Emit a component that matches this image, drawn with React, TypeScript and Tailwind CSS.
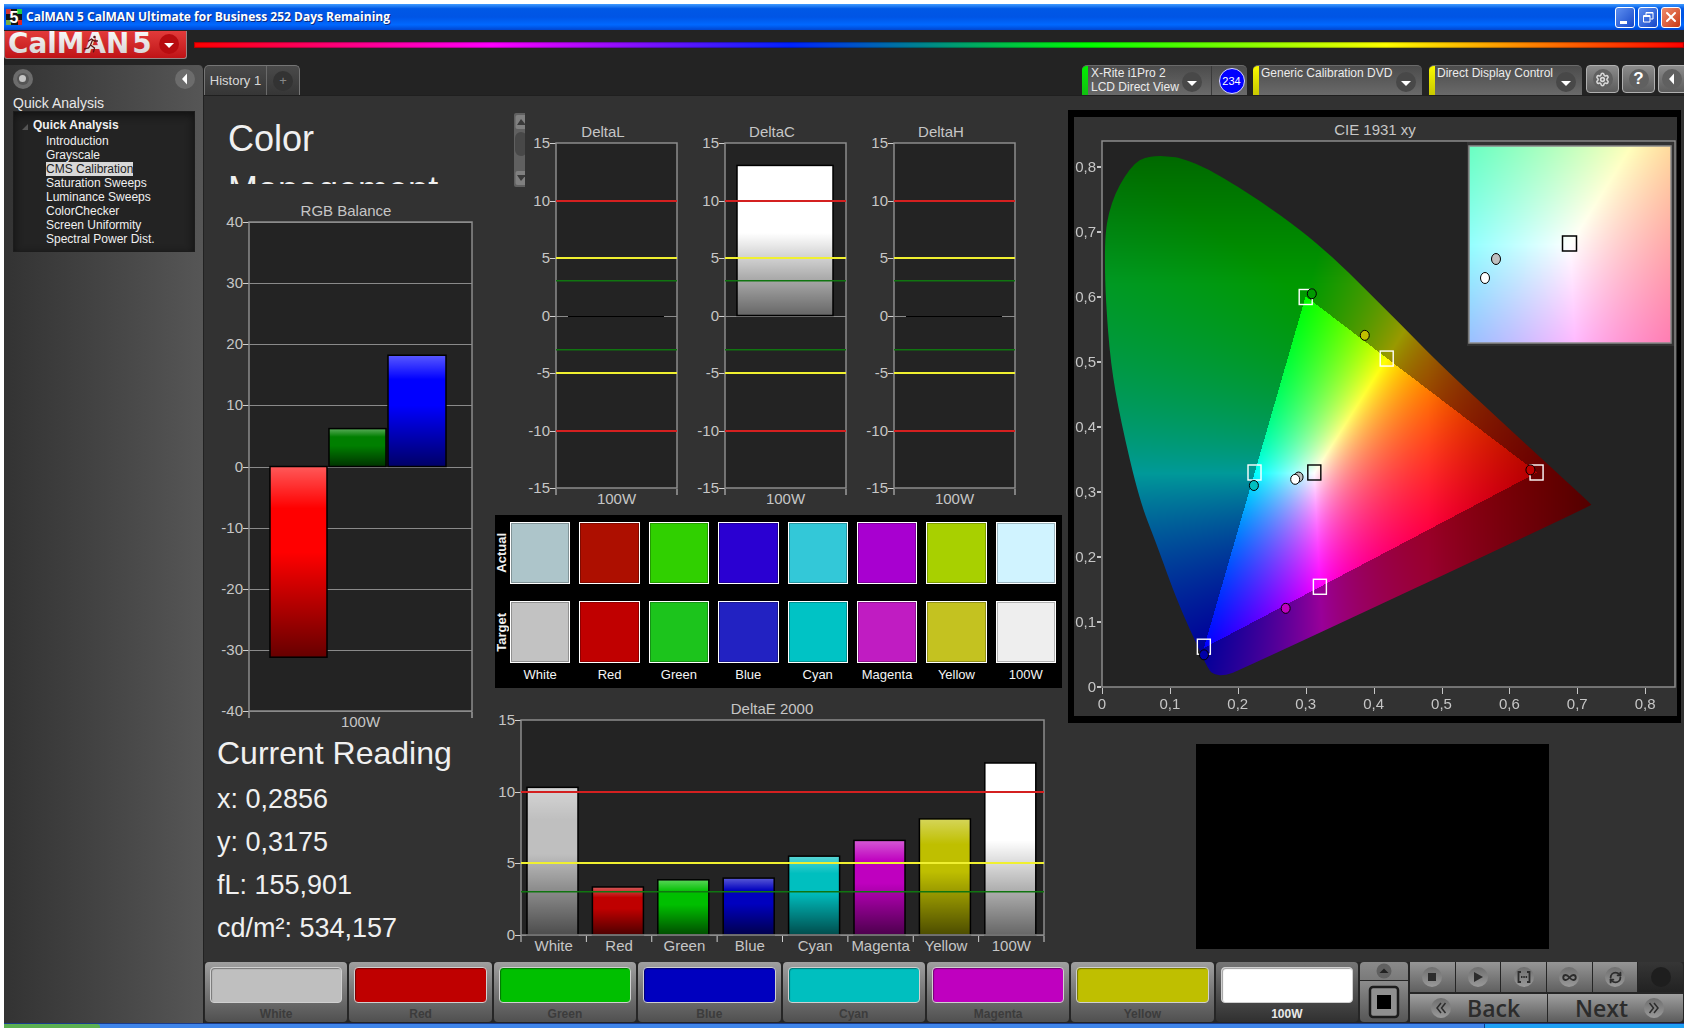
import React, { useEffect, useRef } from 'react';
import { Infinity as InfinityIcon, RefreshCw, Settings, X } from 'lucide-react';

type Point = [number, number];

interface Bar {
  value: number;
  color: string;
  x: number;
  width: number;
}

interface Threshold {
  value: number;
  color: string;
}

interface BarChartProps {
  id: string;
  title: string;
  titleX: number;
  width: number;
  height: number;
  plot: { x: number; y: number; w: number; h: number };
  min: number;
  max: number;
  step: number;
  grid?: boolean;
  thresholds?: Threshold[];
  bars: Bar[];
  categories: string[];
}

const PATTERNS = [
  { name: 'White', actual: '#adc5ca', target: '#c2c2c2', button: '#bfbfbf', deltaE: 10.3 },
  { name: 'Red', actual: '#ad0f00', target: '#c00000', button: '#bf0000', deltaE: 3.35 },
  { name: 'Green', actual: '#30d000', target: '#1cc41c', button: '#00bf00', deltaE: 3.85 },
  { name: 'Blue', actual: '#2a00d2', target: '#2222c2', button: '#0000bf', deltaE: 3.97 },
  { name: 'Cyan', actual: '#33c8d8', target: '#00c3c5', button: '#00bfbf', deltaE: 5.5 },
  { name: 'Magenta', actual: '#a800d0', target: '#c01cc2', button: '#bf00bf', deltaE: 6.6 },
  { name: 'Yellow', actual: '#a8d000', target: '#c4c220', button: '#bfbf00', deltaE: 8.1 },
  { name: '100W', actual: '#d0f3ff', target: '#eeeeee', button: '#ffffff', deltaE: 12 },
];

const DELTA_THRESHOLDS: Threshold[] = [
  { value: 10, color: '#d42020' },
  { value: 5, color: '#f0f030' },
  { value: 3, color: '#107510' },
  { value: -3, color: '#107510' },
  { value: -5, color: '#f0f030' },
  { value: -10, color: '#d42020' },
];

const WORKFLOW = [
  'Introduction',
  'Grayscale',
  'CMS Calibration',
  'Saturation Sweeps',
  'Luminance Sweeps',
  'ColorChecker',
  'Screen Uniformity',
  'Spectral Power Dist.',
];

const BarChart: React.FC<BarChartProps> = ({
  id, title, titleX, width, height, plot, min, max, step, grid, thresholds = [], bars, categories,
}) => {
  const toY = (v: number) => plot.y + ((max - v) / (max - min)) * plot.h;
  const ticks: number[] = [];
  for (let v = min; v <= max; v += step) ticks.push(v);
  const slot = plot.w / categories.length;

  return (
    <svg viewBox={`0 0 ${width} ${height}`} className="block min-w-0 flex-1 text-[15px]" role="img" aria-label={title}>
      <text x={titleX} y={plot.y - 6} textAnchor="middle" fill="#c6c6c6">{title}</text>
      <rect x={plot.x} y={plot.y} width={plot.w} height={plot.h} fill="#232323" />
      {ticks.map((v) => (
        <g key={v}>
          {(grid || v === 0) && (
            <rect x={plot.x} y={Math.round(toY(v))} width={plot.w} height="1" fill="#8a8a8a" />
          )}
          <rect x={plot.x - 6} y={Math.round(toY(v))} width="6" height="1" fill="#d0d0d0" />
          <text x={plot.x - 6} y={Math.round(toY(v)) + 5} textAnchor="end" fill="#c6c6c6">{v}</text>
        </g>
      ))}
      {bars.map((bar, i) => {
        if (bar.value === 0) {
          return <rect key={i} x={bar.x} y={Math.round(toY(0))} width={bar.width} height="1" fill="#000" />;
        }
        const top = toY(Math.max(bar.value, 0));
        const h = Math.abs(toY(bar.value) - toY(0));
        return (
          <g key={i}>
            <defs>
              <linearGradient id={`${id}-${i}`} x1="0" y1="0" x2="0" y2="1">
                <stop offset="0" stopColor="#fff" stopOpacity="0.35" />
                <stop offset="0.22" stopColor="#fff" stopOpacity="0" />
                <stop offset="0.45" stopColor="#000" stopOpacity="0" />
                <stop offset="1" stopColor="#000" stopOpacity="0.6" />
              </linearGradient>
            </defs>
            <rect x={bar.x} y={top} width={bar.width} height={h} fill={bar.color} />
            <rect x={bar.x} y={top} width={bar.width} height={h} fill={`url(#${id}-${i})`} stroke="#000" strokeWidth="1.5" />
          </g>
        );
      })}
      <rect x={plot.x} y={plot.y} width={plot.w} height={plot.h} fill="none" stroke="#8c8c8c" strokeWidth="1.5" />
      {thresholds.map((t) => (
        <rect key={t.value} x={plot.x} y={Math.round(toY(t.value)) - 1} width={plot.w} height={Math.abs(t.value) === 3 ? 1.5 : 2} fill={t.color} />
      ))}
      {Array.from({ length: categories.length + 1 }, (_, i) => (
        <rect key={i} x={plot.x + i * slot - 0.5} y={plot.y + plot.h + 1} width="1" height="6" fill="#d0d0d0" />
      ))}
      {categories.map((c, i) => (
        <text key={c} x={plot.x + (i + 0.5) * slot} y={plot.y + plot.h + 16} textAnchor="middle" fill="#c6c6c6">{c}</text>
      ))}
    </svg>
  );
};

/* ---------- CIE 1931 chromaticity ---------- */

const LOCUS: Point[] = [
  [0.004, 0.657], [0.005, 0.698], [0.0097, 0.729], [0.0197, 0.7595], [0.033, 0.785], [0.048, 0.8056],
  [0.063, 0.8149], [0.08, 0.817], [0.101, 0.8164], [0.1157, 0.8133], [0.139, 0.805], [0.1687, 0.79],
  [0.2335, 0.7477], [0.2924, 0.703], [0.3395, 0.662], [0.3866, 0.6133], [0.4396, 0.5585], [0.4985, 0.4954],
  [0.628, 0.3697], [0.72, 0.282], [0.721, 0.279], [0.204, 0.0262], [0.1816, 0.018], [0.1657, 0.0185],
  [0.157, 0.026], [0.139, 0.067], [0.1186, 0.1133], [0.101, 0.1595], [0.08, 0.221], [0.055, 0.2877],
  [0.0273, 0.4108], [0.0126, 0.498], [0.0055, 0.5954],
];

// xy -> RGB, scaled so that the strongest channel is 1
const chromaToRgb = (x: number, y: number) => {
  const X = x / y;
  const Z = (1 - x - y) / y;
  const rgb = [
    3.2406 * X - 1.5372 - 0.4986 * Z,
    -0.9689 * X + 1.8758 + 0.0415 * Z,
    0.0557 * X - 0.204 + 1.057 * Z,
  ];
  const inside = rgb.every((c) => c >= -0.002);
  const peak = Math.max(...rgb);
  return { rgb: rgb.map((c) => Math.max(c, 0) / peak), inside };
};

interface ChromaCanvasProps {
  width: number;
  height: number;
  x0: number;
  x1: number;
  y0: number;
  y1: number;
  locus?: boolean;
}

const ChromaCanvas: React.FC<ChromaCanvasProps> = ({ width, height, x0, x1, y0, y1, locus }) => {
  const ref = useRef<HTMLCanvasElement>(null);

  useEffect(() => {
    const ctx = ref.current?.getContext('2d');
    if (!ctx) return;
    const image = ctx.createImageData(width, height);
    for (let j = 0; j < height; j++) {
      for (let i = 0; i < width; i++) {
        const x = x0 + ((i + 0.5) / width) * (x1 - x0);
        const y = y1 - ((j + 0.5) / height) * (y1 - y0);
        const { rgb, inside } = chromaToRgb(x, y);
        let level = inside ? 1 : 0.6;
        if (x > 0.48) level *= 1 - (x - 0.48) * 1.9;
        if (y > 0.62) level *= 1 - (y - 0.62) * 1.6;
        const p = (j * width + i) * 4;
        rgb.forEach((c, k) => { image.data[p + k] = c * level * 255; });
        image.data[p + 3] = 255;
      }
    }
    ctx.putImageData(image, 0, 0);

    if (locus) {
      const pts = LOCUS.map(([x, y]): Point => [
        ((x - x0) / (x1 - x0)) * width,
        ((y1 - y) / (y1 - y0)) * height,
      ]);
      ctx.globalCompositeOperation = 'destination-in';
      ctx.beginPath();
      pts.forEach((p, i) => {
        const next = pts[(i + 1) % pts.length];
        const mid: Point = [(p[0] + next[0]) / 2, (p[1] + next[1]) / 2];
        if (i === 0) ctx.moveTo((p[0] + pts[pts.length - 1][0]) / 2, (p[1] + pts[pts.length - 1][1]) / 2);
        ctx.quadraticCurveTo(p[0], p[1], mid[0], mid[1]);
      });
      ctx.closePath();
      ctx.fill();
      ctx.globalCompositeOperation = 'source-over';
    }
  }, [width, height, x0, x1, y0, y1, locus]);

  return <canvas ref={ref} width={width} height={height} className="block h-full w-full" />;
};

const TARGETS: { at: Point; stroke: string }[] = [
  { at: [0.3, 0.6], stroke: '#fff' },
  { at: [0.4193, 0.5053], stroke: '#fff' },
  { at: [0.64, 0.33], stroke: '#fff' },
  { at: [0.3209, 0.1542], stroke: '#fff' },
  { at: [0.15, 0.062], stroke: '#fff' },
  { at: [0.2246, 0.33], stroke: '#fff' },
  { at: [0.3127, 0.33], stroke: '#000' },
];

const READINGS: { at: Point; fill: string }[] = [
  { at: [0.309, 0.605], fill: '#009a00' },
  { at: [0.387, 0.541], fill: '#bfbf00' },
  { at: [0.631, 0.334], fill: '#bf0000' },
  { at: [0.2705, 0.121], fill: '#bf00bf' },
  { at: [0.1502, 0.0495], fill: '#0000a8' },
  { at: [0.2237, 0.31], fill: '#00bfbf' },
  { at: [0.2895, 0.323], fill: '#bfbfbf' },
  { at: [0.2845, 0.3195], fill: '#ffffff' },
];

const CieChart: React.FC = () => {
  const px = (x: number) => 28 + x * 679;
  const py = (y: number) => 570 - y * 650;
  const ticks = [0, 1, 2, 3, 4, 5, 6, 7, 8];
  const label = (t: number) => (t === 0 ? '0' : `0,${t}`);

  return (
    <svg viewBox="0 0 603 599" className="block w-full text-[15px]" role="img" aria-label="CIE 1931 xy">
      <text x="301" y="18" textAnchor="middle" fill="#c6c6c6">CIE 1931 xy</text>
      <rect x="28" y="24" width="573" height="546" fill="#232323" />
      <foreignObject x="28" y="24" width="573" height="546">
        <ChromaCanvas width={573} height={546} x0={0} x1={573 / 679} y0={0} y1={0.84} locus />
      </foreignObject>
      <rect x="28" y="24" width="573" height="546" fill="none" stroke="#8c8c8c" strokeWidth="1.5" />
      {ticks.map((t) => (
        <g key={t} fill="#c6c6c6">
          <rect x={Math.round(px(t / 10))} y="571" width="1" height="6" />
          <rect x="23" y={Math.round(py(t / 10)) - 1} width="4" height="2" />
          <text x={px(t / 10)} y="592" textAnchor="middle">{label(t)}</text>
          <text x="22" y={py(t / 10) + 5} textAnchor="end">{label(t)}</text>
        </g>
      ))}
      {TARGETS.map(({ at, stroke }, i) => (
        <rect key={i} x={px(at[0]) - 6.5} y={py(at[1]) - 7.5} width="13" height="15" fill="none" stroke={stroke} strokeWidth="1.4" />
      ))}
      {READINGS.map(({ at, fill }, i) => (
        <ellipse key={i} cx={px(at[0])} cy={py(at[1])} rx="4.5" ry="5" fill={fill} stroke="#000" />
      ))}
      {/* Zoomed view around the white point */}
      <rect x="393" y="25" width="207" height="204" fill="#323232" />
      <foreignObject x="395" y="29" width="202" height="197">
        <ChromaCanvas width={202} height={197} x0={0.2802} x1={0.345} y0={0.2965} y1={0.3615} />
      </foreignObject>
      <rect x="395" y="29" width="202" height="197" fill="none" stroke="#8c8c8c" strokeWidth="1.5" />
      <rect x="488.5" y="119" width="14" height="15" fill="none" stroke="#000" strokeWidth="1.5" />
      <ellipse cx="422" cy="142" rx="4.5" ry="5.5" fill="#bfbfbf" stroke="#000" />
      <ellipse cx="411" cy="161" rx="4.5" ry="5.5" fill="#fff" stroke="#000" />
    </svg>
  );
};

/* ---------- Window chrome ---------- */

const TitleBar: React.FC = () => (
  <div className="flex h-[26px] items-center bg-[linear-gradient(180deg,#3f9bff_0%,#0058e6_18%,#0055e5_50%,#0068ff_80%,#0046d0_100%)] pl-0.5 pr-[3px]">
    <svg viewBox="0 0 16 16" className="h-4 w-4">
      <rect width="16" height="16" fill="#141414" />
      <rect width="5" height="5" fill="#c33" />
      <rect x="11" width="5" height="5" fill="#2c4" />
      <rect y="11" width="5" height="5" fill="#7a4" />
      <rect x="12" y="11" width="4" height="5" fill="#d22" />
      <text x="8" y="14" textAnchor="middle" fill="#fff" className="text-[16px] font-bold">5</text>
    </svg>
    <h1 className='ml-1 flex-1 whitespace-nowrap font-["Open_Sans","Noto_Sans",sans-serif] text-xs font-bold text-white [text-shadow:1px_1px_0_#0a2a80]'>
      CalMAN 5 CalMAN Ultimate for Business 252 Days Remaining
    </h1>
    <div className="flex gap-[3px]">
      <button type="button" aria-label="Minimize" className="flex h-[21px] w-5 items-end justify-start rounded-[3px] border border-white bg-linear-to-br from-[#5f8ff0] to-[#1746c8] pb-[3px] pl-1 text-white">
        <span className="h-[3px] w-[7px] bg-white" />
      </button>
      <button type="button" aria-label="Restore" className="flex h-[21px] w-5 items-center justify-center rounded-[3px] border border-white bg-linear-to-br from-[#5f8ff0] to-[#1746c8] text-white">
        <svg viewBox="0 0 12 12" className="h-3 w-3" fill="none" stroke="currentColor">
          <path d="M4 4V1.5h7V8H8.5M4 2h7M1.5 4.5h6.5v6.5h-6.5zM1.5 5.5h6.5" />
        </svg>
      </button>
      <button type="button" aria-label="Close" className="flex h-[21px] w-5 items-center justify-center rounded-[3px] border border-white bg-linear-to-br from-[#ee8a6a] to-[#c8360c] text-white">
        <X size={16} strokeWidth={3} />
      </button>
    </div>
  </div>
);

const Logo: React.FC = () => (
  <button type="button" aria-label="CalMAN menu" className="mt-px flex h-7 w-[183px] shrink-0 items-center overflow-hidden rounded-b-[3px] border border-t-0 border-[#9a8484] bg-linear-to-b from-[#e23a3a] to-[#c01216]">
    <svg viewBox="0 0 182 27" className="h-[27px] w-full">
      <defs>
        <linearGradient id="logo-text" x1="0" y1="0" x2="0" y2="1">
          <stop offset="0" stopColor="#ffffff" />
          <stop offset="1" stopColor="#d0cccc" />
        </linearGradient>
      </defs>
      <text x="3" y="22" fill="url(#logo-text)" className='font-["DejaVu_Sans",sans-serif] text-[28px] font-bold'>CalMAN</text>
      <text x="128" y="22" fill="url(#logo-text)" className='font-["DejaVu_Sans",sans-serif] text-[28px] font-bold'>5</text>
      <g stroke="#5a1414" strokeWidth="1.3" fill="none" strokeLinecap="round">
        <circle cx="90" cy="6" r="1.3" fill="#5a1414" stroke="none" />
        <path d="M84 10l3-2 3 2 3 0M88 9l-2 5 4 3-1 4M86 14l-2 3-4 1" />
      </g>
      <circle cx="165" cy="13" r="10" fill="#b80c10" />
      <path d="M160 12h10l-5 5z" fill="#fff" />
    </svg>
  </button>
);

const RoundArrow: React.FC<{ className: string; path: string }> = ({ className, path }) => (
  <svg viewBox="0 0 20 20" className={`h-5 w-5 shrink-0 ${className}`}>
    <circle cx="10" cy="10" r="10" fill="currentColor" />
    <path d={path} fill="#fff" />
  </svg>
);

const DEVICE = 'flex h-[30px] items-stretch rounded-t-[5px] border-t border-[#6a6a6a] bg-linear-to-b from-[#4c4c4c] to-[#6a6a6a] overflow-hidden text-left';
const TOOL = 'flex h-7 w-[33px] shrink-0 items-center justify-center rounded-[4px] border border-[#b0b0b0] bg-linear-to-b from-[#8c8c8c] to-[#5c5c5c]';

const TabRow: React.FC = () => (
  <div className="flex h-[31px] items-start overflow-hidden border-b border-[#1f1f1f]">
    <div className="flex h-[30px] rounded-t-[5px] border border-b-0 border-[#757575] bg-linear-to-b from-[#4a4a4a] to-[#363636]">
      <button type="button" className="w-[61px] text-center text-[13px] text-[#d8d8d8]">History 1</button>
      <button type="button" aria-label="Add history" className="flex w-[33px] items-center justify-center border-l border-[#6a6a6a]">
        <span className="flex h-5 w-5 items-center justify-center rounded-full bg-[#333] text-[13px] text-[#888]">+</span>
      </button>
    </div>
    <div className="ml-auto flex items-start text-xs leading-[14px] text-[#ececec]">
      <div className={`${DEVICE} w-[165px]`}>
        <span className="w-1.5 bg-linear-to-b from-[#00f000] to-[#10c010]" />
        <button type="button" className="flex flex-1 justify-between whitespace-nowrap pl-[3px] pr-[9px] text-left">
          <span>X-Rite i1Pro 2<br />LCD Direct View</span>
          <RoundArrow className="mt-1.5 text-[#484848]" path="M5 9h10l-5 5z" />
        </button>
        <span className="flex w-9 items-center justify-center border-l border-[#3a3a3a] pl-1">
          <span className="flex h-[26px] w-[26px] items-center justify-center rounded-full border border-[#d8d8ff] bg-[#0000ff] text-[11px] text-white">234</span>
        </span>
      </div>
      <button type="button" className={`${DEVICE} ml-1.5 w-[169px]`}>
        <span className="w-1.5 bg-linear-to-b from-[#fafa00] to-[#c8c800]" />
        <span className="flex flex-1 justify-between whitespace-nowrap pl-[2px] pr-1.5">
          Generic Calibration DVD
          <RoundArrow className="mt-1.5 text-[#484848]" path="M5 9h10l-5 5z" />
        </span>
      </button>
      <button type="button" className={`${DEVICE} ml-[7px] w-[153px]`}>
        <span className="w-1.5 bg-linear-to-b from-[#fafa00] to-[#c8c800]" />
        <span className="flex flex-1 justify-between whitespace-nowrap pl-[2px] pr-1.5">
          Direct Display Control
          <RoundArrow className="mt-1.5 text-[#484848]" path="M5 9h10l-5 5z" />
        </span>
      </button>
      <button type="button" aria-label="Settings" className={`${TOOL} ml-1`}>
        <span className="flex h-5 w-5 items-center justify-center rounded-full bg-[#606060] text-[#d8d8d8]">
          <Settings size={15} strokeWidth={2.5} />
        </span>
      </button>
      <button type="button" aria-label="Help" className={`${TOOL} ml-[3px]`}>
        <span className="flex h-5 w-5 items-center justify-center rounded-full bg-[#606060] text-[17px] font-bold text-white">?</span>
      </button>
      <button type="button" aria-label="Collapse" className="ml-[3px] flex h-7 w-[26px] shrink-0 items-center justify-center rounded-l-[4px] border border-r-0 border-[#b0b0b0] bg-linear-to-b from-[#8c8c8c] to-[#5c5c5c]">
        <RoundArrow className="text-[#606060]" path="M12 4.5v11l-5-5.5z" />
      </button>
    </div>
  </div>
);

const Sidebar: React.FC = () => (
  <aside className="w-[200px] shrink-0 rounded-tr-[5px] border-r border-[#222] bg-linear-to-r from-[#333] to-[#565656] pl-[9px] pr-2 pt-1">
    <div className="flex items-center justify-between">
      <button type="button" aria-label="Pin panel">
        <svg viewBox="0 0 20 20" className="block h-5 w-5">
          <circle cx="10" cy="10" r="10" fill="#6c6c6c" />
          <circle cx="10" cy="10" r="6" fill="#555" />
          <circle cx="9.5" cy="9.5" r="3.5" fill="#c4c4c4" />
        </svg>
      </button>
      <button type="button" aria-label="Hide panel">
        <RoundArrow className="block text-[#6c6c6c]" path="M12 4.5v11l-5-5.5z" />
      </button>
    </div>
    <h2 className="mt-1.5 text-[14px] leading-4 text-[#e8e8e8]">Quick Analysis</h2>
    <nav className="h-[141px] border border-[#1c1c1c] bg-[#232323] pt-[6px] text-xs text-[#f0f0f0] shadow-[inset_0_3px_8px_#111]">
      <div className="flex items-center pl-2 leading-[14px]">
        <svg viewBox="0 0 6 6" className="mr-[5px] mt-1 h-1.5 w-1.5"><path d="M6 0v6H0z" fill="#555" /></svg>
        <span className="font-bold">Quick Analysis</span>
      </div>
      <ul className="mt-[2px] pl-8 leading-[14px]">
        {WORKFLOW.map((item) => (
          <li key={item}>
            <a href="#" className={item === 'CMS Calibration' ? 'bg-[#d8d8d8] text-[#222]' : ''}>{item}</a>
          </li>
        ))}
      </ul>
    </nav>
  </aside>
);

const SwatchPanel: React.FC = () => (
  <div className="mr-1.5 mt-1.5 h-[173px] bg-black pr-1.5 pt-[7px]">
    <div className="flex flex-col gap-[17px]">
      {(['actual', 'target'] as const).map((kind) => (
        <div key={kind} className="flex h-[62px]">
          <div className="flex w-[15px] shrink-0 items-center">
            <span className="rotate-180 text-[13px] font-bold leading-[13px] text-[#f0f0f0] [writing-mode:vertical-rl]">
              {kind === 'actual' ? 'Actual' : 'Target'}
            </span>
          </div>
          <div className="flex flex-1 gap-[9px]">
            {PATTERNS.map((p) => (
              <div key={p.name} className="flex-1 border border-white shadow-[inset_0_0_0_1px_#00000040]" style={{ backgroundColor: p[kind] }} />
            ))}
          </div>
        </div>
      ))}
    </div>
    <div className="mt-[3px] flex gap-[9px] pl-[15px] text-[13px] leading-[18px] text-[#f4f4f4]">
      {PATTERNS.map((p) => <span key={p.name} className="min-w-0 flex-1 text-center">{p.name}</span>)}
    </div>
  </div>
);

const ROUND_ICON = 'flex h-5 w-5 items-center justify-center rounded-full bg-linear-to-b from-[#6e6e6e] to-[#9a9a9a] text-[#2c2c2c]';

const FooterBar: React.FC = () => (
  <footer className="flex h-[61px] items-stretch gap-[2px] bg-[#262626] pb-px pl-px pr-px">
    {PATTERNS.map((p) => {
      const active = p.name === '100W';
      return (
        <button
          key={p.name}
          type="button"
          className={`flex min-w-0 flex-1 flex-col rounded-[4px] px-[5px] pt-[5px] ${
            active ? 'bg-linear-to-b from-[#767676] to-[#303030] text-[#e8e8e8]' : 'bg-linear-to-b from-[#a0a0a0] to-[#505050] text-[#3c3c3c]'
          }`}
        >
          <span className="h-[37px] w-full rounded-[4px] border border-[#d0d0d0] shadow-[inset_1px_1px_1px_#00000060]" style={{ backgroundColor: p.button }} />
          <span className="mt-[3px] w-full text-center text-xs font-bold leading-4">{p.name}</span>
        </button>
      );
    })}
    <div className="flex w-12 flex-col gap-px">
      <button type="button" aria-label="Expand patterns" className="flex h-[18px] items-center justify-center rounded-t-[4px] bg-linear-to-b from-[#8a8a8a] to-[#7a7a7a]">
        <svg viewBox="0 0 16 16" className="h-4 w-4">
          <circle cx="8" cy="8" r="7.5" fill="#606060" />
          <path d="M3.5 10h9L8 5.5z" fill="#222" />
        </svg>
      </button>
      <button type="button" aria-label="Pattern window" className="flex flex-1 items-center justify-center rounded-b-[4px] bg-linear-to-b from-[#8c8c8c] to-[#565656]">
        <svg viewBox="0 0 32 34" className="h-[34px] w-8">
          <rect x="2" y="2" width="28" height="30" rx="3" fill="#909090" stroke="#1c1c1c" strokeWidth="2.5" />
          <rect x="9" y="10" width="14" height="14" fill="#000" />
        </svg>
      </button>
    </div>
    <div className="flex w-[273px] flex-col gap-[2px]">
      <div className="flex h-[30px] gap-px">
        {[
          { label: 'Stop', icon: <span className="h-2 w-2 bg-[#2c2c2c]" /> },
          { label: 'Play', icon: <svg viewBox="0 0 10 10" className="h-2.5 w-2.5"><path d="M1 0l9 5-9 5z" fill="currentColor" /></svg> },
          {
            label: 'Series',
            icon: (
              <svg viewBox="0 0 14 12" className="h-3 w-3.5" fill="none" stroke="currentColor" strokeWidth="1.8">
                <path d="M4 1H1.5v10H4M10 1h2.5v10H10M4 6h1.5M6.3 6h1.5M8.6 6h1.5" />
              </svg>
            ),
          },
          { label: 'Loop', icon: <InfinityIcon size={15} strokeWidth={3} /> },
          { label: 'Refresh', icon: <RefreshCw size={13} strokeWidth={3.5} /> },
        ].map((b) => (
          <button key={b.label} type="button" aria-label={b.label} className="flex flex-1 items-center justify-center bg-linear-to-b from-[#969696] to-[#606060]">
            <span className={ROUND_ICON}>{b.icon}</span>
          </button>
        ))}
        <button type="button" aria-label="Record" className="flex flex-1 items-center justify-center rounded-tr-[4px] bg-linear-to-b from-[#363636] to-[#222]">
          <span className="h-5 w-5 rounded-full bg-[#1e1e1e]" />
        </button>
      </div>
      <div className='flex flex-1 gap-px font-["Open_Sans","Noto_Sans",sans-serif] text-[23px] font-semibold leading-7 text-[#2c2c2c]'>
        <button type="button" className="flex flex-1 items-center gap-4 bg-linear-to-b from-[#a0a0a0] to-[#5c5c5c] pl-[21px]">
          <span className={ROUND_ICON}>
            <svg viewBox="0 0 12 12" className="h-3 w-3" fill="none" stroke="currentColor" strokeWidth="1.5"><path d="M6 1L2 6l4 5M10.5 1l-4 5 4 5" /></svg>
          </span>
          Back
        </button>
        <button type="button" className="flex flex-1 items-center justify-end gap-4 rounded-br-[4px] bg-linear-to-b from-[#a0a0a0] to-[#5c5c5c] pr-[19px]">
          Next
          <span className={ROUND_ICON}>
            <svg viewBox="0 0 12 12" className="h-3 w-3" fill="none" stroke="currentColor" strokeWidth="1.5"><path d="M1.5 1l4 5-4 5M6 1l4 5-4 5" /></svg>
          </span>
        </button>
      </div>
    </div>
  </footer>
);

const App: React.FC = () => {
  const deltaPlot = { x: 28, y: 30, w: 121, h: 345 };

  return (
    <div className='flex min-h-screen flex-col bg-white px-1 pt-1 font-["Liberation_Sans",sans-serif]'>
      <TitleBar />

      {/* Logo and spectrum line */}
      <header className="flex h-[35px] items-start bg-[#232323]">
        <Logo />
        <div className="ml-[7px] mt-3 h-1.5 flex-1 bg-[linear-gradient(90deg,#f00_0%,#f0f_20%,#02f_40%,#0f0_60%,#ff0_80%,#f00_100%)] shadow-[inset_0_0_1px_1px_#00000050]" />
      </header>

      <div className="flex flex-1 bg-[#232323]">
        <Sidebar />
        <div className="flex min-w-0 flex-1 flex-col">
          <TabRow />

          <main className="grid flex-1 grid-cols-[291fr_573fr_616fr] bg-[#323232]">
            {/* RGB balance and current reading */}
            <section className="text-[#f0f0f0]">
              <h2 className="h-[88px] overflow-hidden pl-6 pr-8 pt-[17px] text-[36px] leading-[51px]">Color Management</h2>
              <div className="flex">
                <BarChart
                  id="rgb"
                  title="RGB Balance"
                  titleX={142}
                  width={291}
                  height={548}
                  plot={{ x: 45, y: 38, w: 223, h: 489 }}
                  min={-40}
                  max={40}
                  step={10}
                  grid
                  bars={[
                    { value: -31.2, color: '#ff0000', x: 66, width: 57 },
                    { value: 6.2, color: '#007f00', x: 125, width: 57 },
                    { value: 18.2, color: '#0000ff', x: 184, width: 58 },
                  ]}
                  categories={['100W']}
                />
              </div>
              <div className="whitespace-nowrap pl-[13px] text-[27px] leading-[43px]">
                <h2 className="mb-1 text-[32px] leading-[42px]">Current Reading</h2>
                <p>x: 0,2856</p>
                <p>y: 0,3175</p>
                <p>fL: 155,901</p>
                <p>cd/m²: 534,157</p>
              </div>
            </section>

            {/* Delta charts and swatches */}
            <section>
              <div className="flex items-start pl-[19px] pr-[52px] pt-[17px]">
                <svg viewBox="0 0 11 74" className="mr-[3px] h-[74px] w-[11px] shrink-0">
                  <rect width="14" height="74" rx="2" fill="#606060" />
                  <rect x="1.5" y="2" width="12" height="14" rx="2" fill="#808080" />
                  <path d="M3 12h9L7 6z" fill="#3a3a3a" />
                  <rect x="1" y="19" width="12" height="24" rx="6" fill="#484848" />
                  <rect x="1.5" y="58" width="12" height="14" rx="2" fill="#808080" />
                  <path d="M3 62h9l-5 6z" fill="#3a3a3a" />
                </svg>
                <div className="flex min-w-0 flex-1 gap-[19px]">
                  {[
                    { title: 'DeltaL', value: 0 },
                    { title: 'DeltaC', value: 13.05 },
                    { title: 'DeltaH', value: 0 },
                  ].map((c) => (
                    <BarChart
                      key={c.title}
                      id={c.title}
                      title={c.title}
                      titleX={75}
                      width={150}
                      height={396}
                      plot={deltaPlot}
                      min={-15}
                      max={15}
                      step={5}
                      thresholds={DELTA_THRESHOLDS}
                      bars={[{ value: c.value, color: '#ffffff', x: 40, width: 96 }]}
                      categories={['100W']}
                    />
                  ))}
                </div>
              </div>
              <SwatchPanel />
              <div className="flex">
                <BarChart
                  id="de2000"
                  title="DeltaE 2000"
                  titleX={277}
                  width={573}
                  height={274}
                  plot={{ x: 26, y: 32, w: 523, h: 215 }}
                  min={0}
                  max={15}
                  step={5}
                  thresholds={DELTA_THRESHOLDS.filter((t) => t.value > 0)}
                  bars={PATTERNS.map((p, i) => ({ value: p.deltaE, color: p.button, x: 32 + i * 65.4, width: 51 }))}
                  categories={PATTERNS.map((p) => p.name)}
                />
              </div>
            </section>

            {/* Chromaticity diagram and preview */}
            <section>
              <div className="mr-[3px] mt-3.5 border-y-[7px] border-l-[6px] border-r-4 border-black">
                <CieChart />
              </div>
              <div className="ml-32 mt-[21px] h-[205px] w-[353px] bg-black" />
            </section>
          </main>

          <FooterBar />
        </div>
      </div>

      {/* Top edge of the taskbar */}
      <div className="flex h-[5px] border-t border-[#1a3c8c] bg-[#3f85ea]">
        <div className="w-24 rounded-tr-[3px] bg-[#5cb052]" />
        <div className="ml-auto w-[200px] border-l border-[#10408c] bg-[#1ea0f4]" />
      </div>
    </div>
  );
};

export default App;
